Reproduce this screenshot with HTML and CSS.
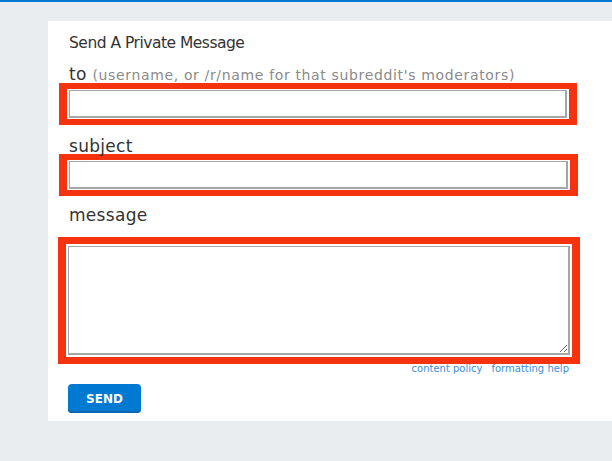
FILE: index.html
```html
<!DOCTYPE html>
<html>
<head>
<meta charset="utf-8">
<link rel="stylesheet" href="styles.css">
</head>
<body>
<div class="topline"></div>
<div class="page">
  <form class="card">
    <h1 class="title">Send A Private Message</h1>
    <div class="label label-to">to <span class="hint">(username, or /r/name for that subreddit's moderators)</span></div>
    <div class="mark mark-to"><input class="field" type="text"></div>
    <div class="label label-subject">subject</div>
    <div class="mark mark-subject"><input class="field" type="text"></div>
    <div class="label label-message">message</div>
    <div class="mark mark-message"><textarea class="area"></textarea></div>
    <div class="links"><a href="#">content policy</a><a href="#">formatting help</a></div>
    <button class="send" type="button">SEND</button>
  </form>
</div>
</body>
</html>
```
FILE: styles.css
```css
html, body {
  margin: 0;
  padding: 0;
  background: #eaedf0;
  font-family: "DejaVu Sans", Verdana, sans-serif;
}
.topline {
  height: 2px;
  background: #0079d3;
}
.page {
  padding: 19px 0 40px 48px;
}
.card {
  display: block;
  background: #fff;
  padding: 12px 0 0 11px;
  height: 400px;
  box-sizing: border-box;
}
.title {
  margin: 0 0 0 10px;
  font-size: 15.5px;
  letter-spacing: -0.5px;
  font-weight: normal;
  color: #333;
  line-height: 20px;
}
.label {
  margin-left: 10px;
  font-size: 17px;
  letter-spacing: 0.3px;
  color: #333;
  line-height: 20px;
}
.label-to { margin-top: 11px; }
.label-subject { margin-top: 11px; }
.label-message { margin-top: 9px; }
.hint {
  font-size: 14px;
  letter-spacing: 0.65px;
  color: #8a8a8a;
}
.mark {
  border: solid #f5330f;
  border-width: 6px 8px;
  padding: 1px 2px;
  background: #fff;
  box-sizing: border-box;
}
.mark-to {
  width: 518px;
  margin-top: -2px;
}
.mark-subject {
  width: 519px;
  margin-top: -2px;
}
.mark-message {
  width: 522px;
  margin-left: -1px;
  margin-top: 12px;
  border-width: 7px 8px;
  padding: 2px 2px;
}
.field {
  display: block;
  width: 100%;
  height: 28px;
  box-sizing: border-box;
  margin: 0;
  border: 1px solid #a6a6a6;
  border-right-width: 2px;
  border-bottom-width: 2px;
  background: #fff;
  outline: none;
}
.area {
  display: block;
  width: 100%;
  height: 109px;
  box-sizing: border-box;
  margin: 0;
  border: 1px solid #a6a6a6;
  border-right-width: 2px;
  border-bottom-width: 2px;
  resize: vertical;
  outline: none;
  font-family: inherit;
}
.links {
  width: 510px;
  display: flex;
  justify-content: flex-end;
  gap: 9px;
  font-size: 10px;
  line-height: 12px;
  margin-top: -1px;
}
.links a {
  color: #3d8fd6;
  text-decoration: none;
}
.send {
  display: block;
  margin: 9px 0 0 9px;
  width: 73px;
  height: 29px;
  border: none;
  border-radius: 4px;
  background: #0079d3;
  box-shadow: inset 0 -2px 0 #0a66b0;
  color: #fff;
  font-family: "DejaVu Sans", Verdana, sans-serif;
  font-weight: bold;
  font-size: 12px;
  padding: 0;
}
```
